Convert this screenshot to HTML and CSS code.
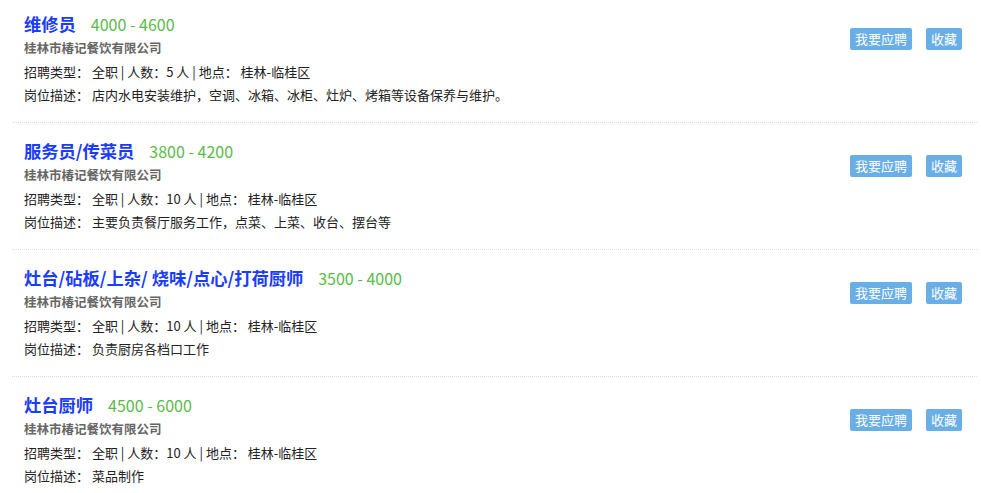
FILE: index.html
```html
<!DOCTYPE html>
<html lang="zh-CN">
<head>
    <meta charset="UTF-8">
    <meta name="viewport" content="width=device-width, initial-scale=1.0">
    <title>招聘职位</title>
    <link rel="stylesheet" href="styles.css">
</head>
<body>
    <ul class="job-list">
        <li class="job-item">
            <div class="job-info">
                <h3 class="job-title">维修员 <span class="salary">4000 - 4600</span></h3>
                <p class="company">桂林市椿记餐饮有限公司</p>
                <p class="line">招聘类型： 全职 | 人数：5 人 | 地点： 桂林-临桂区</p>
                <p class="line">岗位描述： 店内水电安装维护，空调、冰箱、冰柜、灶炉、烤箱等设备保养与维护。</p>
            </div>
            <div class="job-actions">
                <a class="btn" href="#">我要应聘</a>
                <a class="btn" href="#">收藏</a>
            </div>
        </li>
        <li class="job-item">
            <div class="job-info">
                <h3 class="job-title">服务员/传菜员 <span class="salary">3800 - 4200</span></h3>
                <p class="company">桂林市椿记餐饮有限公司</p>
                <p class="line">招聘类型： 全职 | 人数：10 人 | 地点： 桂林-临桂区</p>
                <p class="line">岗位描述： 主要负责餐厅服务工作，点菜、上菜、收台、摆台等</p>
            </div>
            <div class="job-actions">
                <a class="btn" href="#">我要应聘</a>
                <a class="btn" href="#">收藏</a>
            </div>
        </li>
        <li class="job-item">
            <div class="job-info">
                <h3 class="job-title">灶台/砧板/上杂/ 烧味/点心/打荷厨师 <span class="salary">3500 - 4000</span></h3>
                <p class="company">桂林市椿记餐饮有限公司</p>
                <p class="line">招聘类型： 全职 | 人数：10 人 | 地点： 桂林-临桂区</p>
                <p class="line">岗位描述： 负责厨房各档口工作</p>
            </div>
            <div class="job-actions">
                <a class="btn" href="#">我要应聘</a>
                <a class="btn" href="#">收藏</a>
            </div>
        </li>
        <li class="job-item">
            <div class="job-info">
                <h3 class="job-title">灶台厨师 <span class="salary">4500 - 6000</span></h3>
                <p class="company">桂林市椿记餐饮有限公司</p>
                <p class="line">招聘类型： 全职 | 人数：10 人 | 地点： 桂林-临桂区</p>
                <p class="line">岗位描述： 菜品制作</p>
            </div>
            <div class="job-actions">
                <a class="btn" href="#">我要应聘</a>
                <a class="btn" href="#">收藏</a>
            </div>
        </li>
    </ul>
</body>
</html>
```

FILE: styles.css
```css
body, html {
    margin: 0;
    padding: 0;
    background: #ffffff;
    font-family: "Microsoft YaHei", "Noto Sans CJK SC", sans-serif;
    color: #222;
}

.job-list {
    list-style: none;
    margin: 0;
    padding: 0 4px 0 12px;
}

.job-item {
    display: flex;
    justify-content: space-between;
    padding: 15px 0 16px 12px;
    border-bottom: 1px dotted #dcdcdc;
}

.job-item:first-child {
    padding-top: 11px;
}

.job-item:first-child .job-actions {
    margin-top: 17px;
}

.job-item:last-child {
    border-bottom: none;
}

.job-title {
    margin: 0;
    font-size: 17.3px;
    line-height: 26px;
    font-weight: bold;
    color: #1a3cff;
}

.salary {
    margin-left: 11px;
    font-size: 16px;
    font-weight: normal;
    color: #5bbb4a;
}

.company {
    margin: 1px 0 2px;
    font-size: 12.5px;
    line-height: 20px;
    font-weight: bold;
    color: #666;
}

.line {
    margin: 0;
    font-size: 13px;
    line-height: 23px;
    color: #222;
}

.job-actions {
    display: flex;
    gap: 14px;
    align-self: flex-start;
    margin-top: 17px;
    margin-right: 15px;
}

.btn {
    display: block;
    height: 22px;
    line-height: 22px;
    padding: 0 5px;
    font-size: 13px;
    color: #ffffff;
    background-color: #6aaee6;
    border-radius: 2px;
    text-decoration: none;
}
```
